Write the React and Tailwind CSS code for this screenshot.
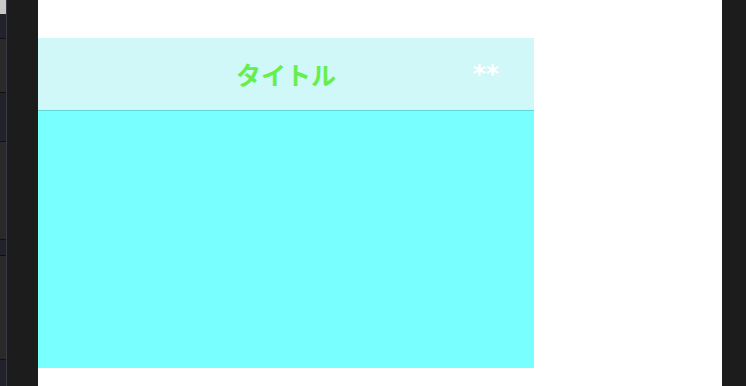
export default function App() {
  const leftBlocks = [
    { h: "h-[14px]", c: "bg-[#c8c8c8]" },
    { h: "h-[24px]", c: "bg-[#22222c]" },
    { h: "h-[55px]", c: "bg-[#2a2a2a] border-y border-[#111]" },
    { h: "h-[48px]", c: "bg-[#22222c]" },
    { h: "h-[99px]", c: "bg-[#2a2a2a] border-y border-[#111]" },
    { h: "h-[15px]", c: "bg-[#22222c]" },
    { h: "h-[105px]", c: "bg-[#2a2a2a] border-y border-[#111]" },
    { h: "h-[26px]", c: "bg-[#22222c]" },
  ]

  return (
    <div className="flex h-[386px] w-[746px] overflow-hidden bg-[#1c1c1c]">
      {/* left edge strip */}
      <div className="flex w-[38px] shrink-0">
        <div className="flex w-[7px] flex-col border-r border-[#3a3a44]">
          {leftBlocks.map((b, i) => (
            <div key={i} className={`${b.h} ${b.c} shrink-0`} />
          ))}
        </div>
      </div>

      {/* page */}
      <div className="flex w-[684px] shrink-0 flex-col bg-white pt-[38px]">
        <div className="w-[496px]">
          <div className="relative flex h-[73px] items-center justify-center border-b border-[#5fd6d6] bg-[#d0f8f8]">
            <span className="text-[25px] font-bold leading-none text-[#66ee4c] [font-family:'Noto_Sans_CJK_JP',sans-serif]">
              タイトル
            </span>
            <span className="absolute right-[35px] top-[23px] text-[25px] font-semibold leading-none text-white [font-family:'DejaVu_Sans',sans-serif]">
              **
            </span>
          </div>
          <div className="h-[257px] bg-[#78ffff]" />
        </div>
      </div>
    </div>
  )
}
